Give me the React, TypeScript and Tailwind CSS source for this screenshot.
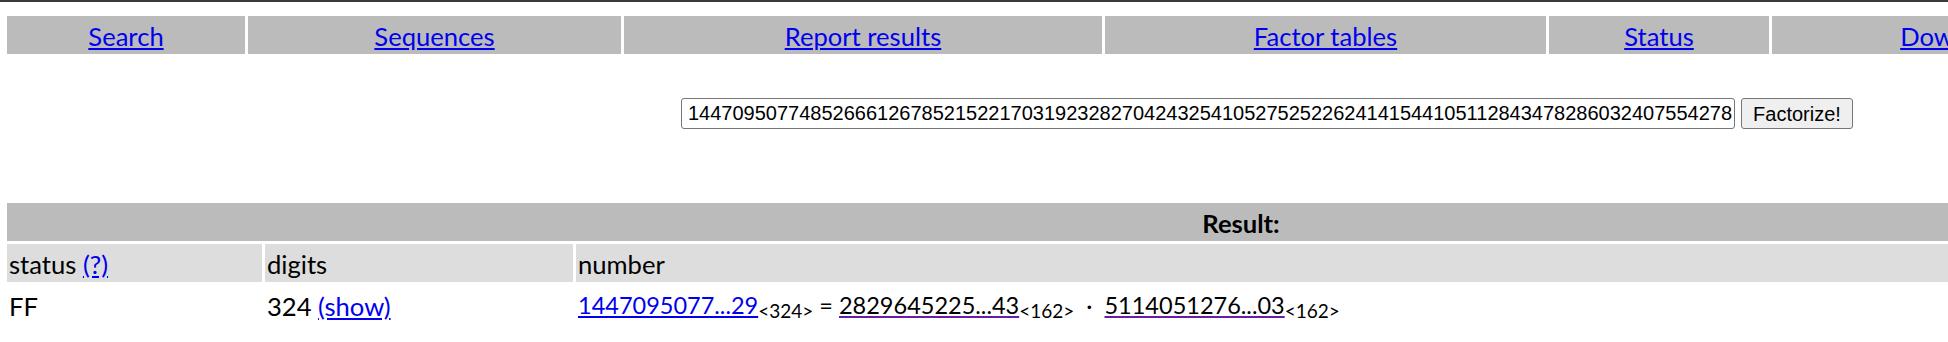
import React from 'react';

const menu = [
  { label: 'Search', w: 'w-[238px]' },
  { label: 'Sequences', w: 'w-[373px]' },
  { label: 'Report results', w: 'w-[478px]' },
  { label: 'Factor tables', w: 'w-[441px]' },
  { label: 'Status', w: 'w-[220px]' },
  { label: 'Downloads', w: 'w-[383px]' },
  { label: 'Login', w: 'w-[364px]' },
];

const number =
  '1447095077485266612678521522170319232827042432541052752522624141544105112843478286032407554278';

const Sub = ({ children }: { children: React.ReactNode }) => (
  <sub className="text-[19px] align-[-6px] leading-none">{children}</sub>
);

export default function App() {
  return (
    <div className="w-[1948px] h-[342px] overflow-hidden bg-white font-['Lato',sans-serif] text-[25.6px] text-black">
      <div className="w-[2534px]">
        <div className="h-[2px] bg-[#3a3a3a]" />

        {/* top menu */}
        <nav className="flex gap-[3px] pl-[7px] mt-[14px]">
          {menu.map((m) => (
            <div
              key={m.label}
              className={`${m.w} shrink-0 h-[38px] bg-[#bbbbbb] flex items-center justify-center pt-[2px]`}
            >
              <a href="#" className="text-[#0000ee] underline">
                {m.label}
              </a>
            </div>
          ))}
        </nav>

        {/* factor form */}
        <form className="flex justify-center gap-[6px] mt-[44px]" onSubmit={(e) => e.preventDefault()}>
          <input
            readOnly
            value={number}
            className="w-[1054px] h-[31px] border border-[#767676] rounded-[3px] bg-white pl-[6px] pr-0 font-['Liberation_Sans',Arial,sans-serif] text-[20px] text-black outline-none"
          />
          <button
            type="submit"
            className="w-[112px] h-[31px] border border-[#767676] rounded-[3px] bg-[#efefef] font-['Liberation_Sans',Arial,sans-serif] text-[20px] text-black"
          >
            Factorize!
          </button>
        </form>

        {/* result table */}
        <div className="w-[2468px] ml-[7px] mt-[74px] flex flex-col gap-[3px]">
          <div className="h-[38px] bg-[#bbbbbb] flex items-center justify-center pt-[2px] font-bold">
            Result:
          </div>
          <div className="flex gap-[3px] h-[38px]">
            <div className="w-[255px] bg-[#dddddd] flex items-center pl-[2px] pt-[2px]">
              status&nbsp;
              <a href="#" className="text-[#0000ee] underline">
                (?)
              </a>
            </div>
            <div className="w-[308px] bg-[#dddddd] flex items-center pl-[2px] pt-[2px]">digits</div>
            <div className="flex-1 bg-[#dddddd] flex items-center pl-[2px] pt-[2px]">number</div>
          </div>
          <div className="flex gap-[3px] h-[38px]">
            <div className="w-[255px] flex items-center pl-[2px] pt-[4px]">FF</div>
            <div className="w-[308px] flex items-center pl-[2px] pt-[4px]">
              324&nbsp;
              <a href="#" className="text-[#0000ee] underline">
                (show)
              </a>
            </div>
            <div className="flex-1 flex items-center pl-[2px] pt-[4px] whitespace-pre text-[23.5px]">
              <a href="#" className="text-[#0000ee] underline">
                1447095077...29
              </a>
              <Sub>&lt;324&gt;</Sub>
              {' = '}
              <a href="#" className="text-black underline decoration-[#681da8]">
                2829645225...43
              </a>
              <Sub>&lt;162&gt;</Sub>
              {'  ·  '}
              <a href="#" className="text-black underline decoration-[#681da8]">
                5114051276...03
              </a>
              <Sub>&lt;162&gt;</Sub>
            </div>
          </div>
        </div>
      </div>
    </div>
  );
}
